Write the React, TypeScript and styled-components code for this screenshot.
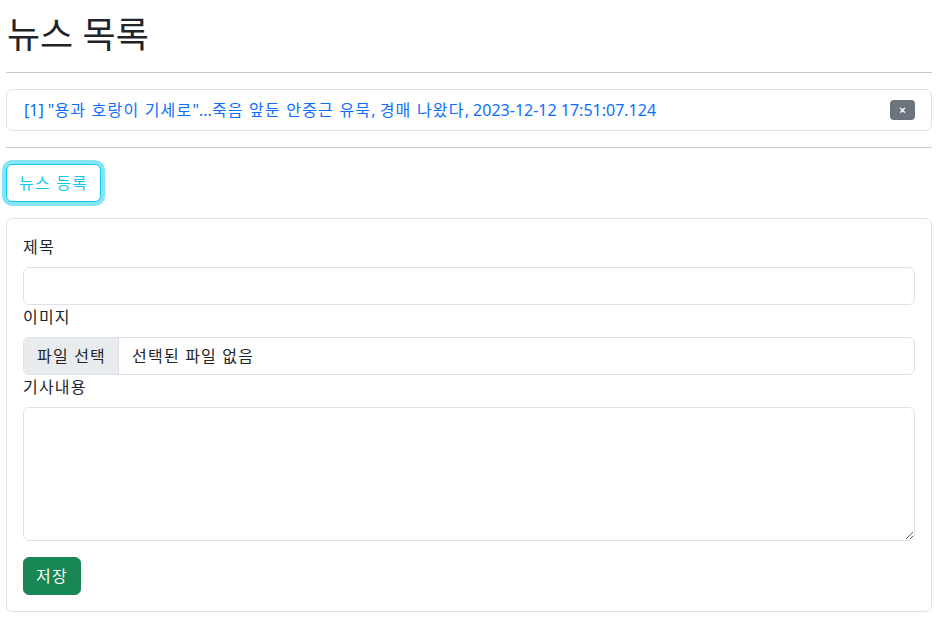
import React, { FunctionComponent } from 'react';
import styled, { createGlobalStyle } from 'styled-components';

interface NewsItem {
  id: number;
  title: string;
  createdAt: string;
}

const newsList: NewsItem[] = [
  {
    id: 1,
    title: '"용과 호랑이 기세로"...죽음 앞둔 안중근 유묵, 경매 나왔다',
    createdAt: '2023-12-12 17:51:07.124',
  },
];

const GlobalStyle = createGlobalStyle`
  body {
    margin: 0;
    background: #fff;
    color: #212529;
    font-family: "Noto Sans", "Noto Sans CJK KR", sans-serif;
    font-size: 16px;
    line-height: 1.5;
  }
  * {
    box-sizing: border-box;
  }
`;

const Hangul = styled.span`
  letter-spacing: 1.2px;
`;

const T: FunctionComponent<{ text: string }> = ({ text }) => (
  <>
    {text.split(/([\uAC00-\uD7A3]+(?: [\uAC00-\uD7A3]+)*)/).map((part, i) =>
      i % 2 === 1 ? <Hangul key={i}>{part}</Hangul> : part
    )}
  </>
);

const App: FunctionComponent = () => {
  return (
    <Page>
      <GlobalStyle />
      <Title>
        <T text="뉴스 목록" />
      </Title>
      <Rule />
      {newsList.map((news) => (
        <NewsCard key={news.id}>
          <NewsLink href="#">
            <T text={`[${news.id}] ${news.title}, ${news.createdAt}`} />
          </NewsLink>
          <DeleteButton type="button">×</DeleteButton>
        </NewsCard>
      ))}
      <Rule />
      <OutlineButton type="button">
        <T text="뉴스 등록" />
      </OutlineButton>
      <FormCard>
        <Label htmlFor="title">
          <T text="제목" />
        </Label>
        <TextInput id="title" type="text" />
        <Label htmlFor="image">
          <T text="이미지" />
        </Label>
        <FileBox htmlFor="image">
          <FileButton>
            <T text="파일 선택" />
          </FileButton>
          <FileName>
            <T text="선택된 파일 없음" />
          </FileName>
          <HiddenInput id="image" type="file" />
        </FileBox>
        <Label htmlFor="content">
          <T text="기사내용" />
        </Label>
        <TextArea id="content" rows={5} />
        <SaveButton type="button">
          <T text="저장" />
        </SaveButton>
      </FormCard>
    </Page>
  );
};

const Page = styled.div`
  padding: 13px 5px 6px 6px;
`;

const Title = styled.h1`
  margin: 0 0 8px;
  font-size: 36px;
  font-weight: 400;
  line-height: 1.2;
  padding-left: 1px;

  ${Hangul} {
    letter-spacing: 0;
  }
`;

const Rule = styled.hr`
  margin: 16px 0;
  border: 0;
  border-top: 1px solid #c8c9ca;
`;

const NewsCard = styled.div`
  display: flex;
  align-items: center;
  justify-content: space-between;
  padding: 8px 16px 8px 17px;
  border: 1px solid #dee2e6;
  border-radius: 6px;
`;

const NewsLink = styled.a`
  color: #0d6efd;
  text-decoration: none;
`;

const DeleteButton = styled.button`
  width: 25px;
  height: 20px;
  padding: 0;
  border: none;
  border-radius: 4px;
  background: #6c757d;
  color: #fff;
  font-size: 11px;
  font-weight: 700;
  line-height: 20px;
  font-family: "Liberation Sans", sans-serif;
  cursor: pointer;
`;

const OutlineButton = styled.button`
  display: block;
  padding: 6px 12px;
  border: 1px solid #0dcaf0;
  border-radius: 6px;
  background: #fff;
  color: #0dcaf0;
  font: inherit;
  line-height: 24px;
  box-shadow: 0 0 0 4px rgba(13, 202, 240, 0.5);
  cursor: pointer;
`;

const FormCard = styled.form`
  margin-top: 16px;
  padding: 16px;
  border: 1px solid #dee2e6;
  border-radius: 6px;
`;

const Label = styled.label`
  display: block;
  margin-bottom: 8px;
`;

const fieldBorder = `
  width: 100%;
  border: 1px solid #dee2e6;
  border-radius: 6px;
  background: #fff;
  color: #212529;
  font: inherit;
`;

const TextInput = styled.input`
  ${fieldBorder}
  display: block;
  height: 38px;
  padding: 6px 12px;
`;

const FileBox = styled.label`
  ${fieldBorder}
  display: flex;
  height: 38px;
  overflow: hidden;
  cursor: pointer;
`;

const FileButton = styled.span`
  padding: 6px 12px 6px 13px;
  background: #e9ecef;
  border-right: 1px solid #dee2e6;
  line-height: 24px;
`;

const FileName = styled.span`
  padding: 6px 13px;
  line-height: 24px;
`;

const HiddenInput = styled.input`
  display: none;
`;

const TextArea = styled.textarea`
  ${fieldBorder}
  display: block;
  height: 134px;
  padding: 6px 12px;
  line-height: 1.5;
  resize: vertical;
`;

const SaveButton = styled.button`
  display: block;
  margin-top: 16px;
  padding: 6px 12px;
  border: 1px solid #198754;
  border-radius: 6px;
  background: #198754;
  color: #fff;
  font: inherit;
  line-height: 24px;
  cursor: pointer;
`;

export default App;
